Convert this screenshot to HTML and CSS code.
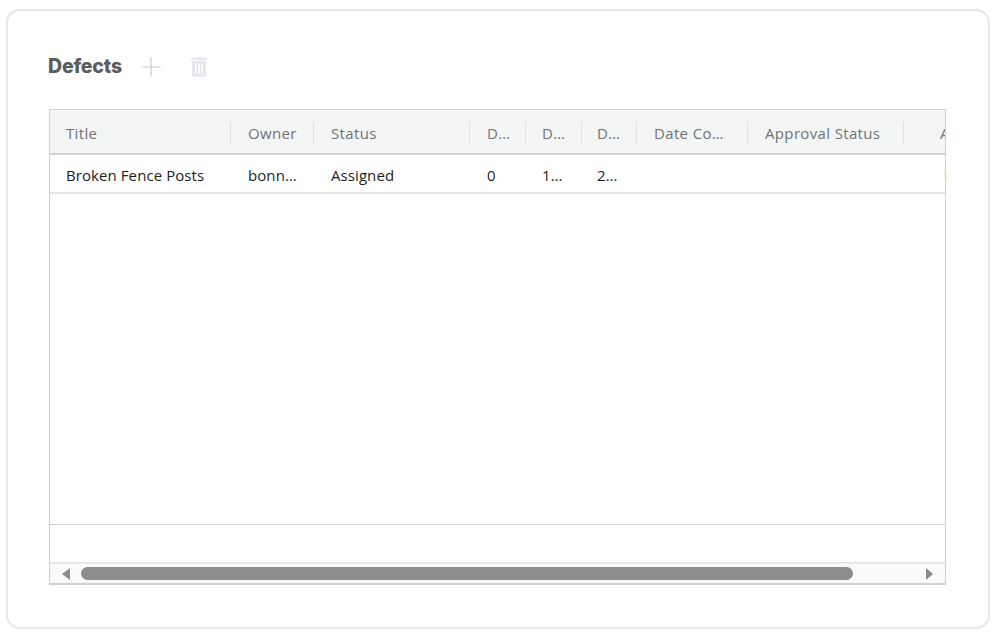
FILE: index.html
```html
<!DOCTYPE html>
<html lang="en">
<head>
<meta charset="utf-8">
<title>Defects</title>
<link rel="stylesheet" href="styles.css">
</head>
<body>
<main class="card">
  <div class="toolbar">
    <h2 class="title">Defects</h2>
    <button class="tool tool-add" aria-label="Add">
      <svg width="20" height="20" viewBox="0 0 20 20"><path d="M10 .5v19M.5 10h19" fill="none" stroke="#c8c8d6" stroke-width="1.2"/></svg>
    </button>
    <button class="tool tool-del" aria-label="Delete">
      <svg width="18" height="21" viewBox="0 0 18 21"><path d="M6.500 2V.7h5V2H17v2.200H1V2zM2 5h14v14.200a1.500 1.500 0 0 1-1.500 1.500h-11A1.500 1.500 0 0 1 2 19.200zM5 7.500v10.500h1.500V7.500zM8.250 7.500v10.500h1.500V7.500zM11.500 7.500v10.500H13V7.500z" fill="#e6e6ee" fill-rule="evenodd"/></svg>
    </button>
  </div>
  <section class="grid">
    <div class="row head">
      <div class="cell c-title">Title</div>
      <div class="cell c-owner">Owner</div>
      <div class="cell c-status">Status</div>
      <div class="cell c-d1">D…</div>
      <div class="cell c-d2">D…</div>
      <div class="cell c-d3">D…</div>
      <div class="cell c-date">Date Co…</div>
      <div class="cell c-appr">Approval Status</div>
      <div class="cell c-last">A</div>
    </div>
    <div class="row body-row">
      <div class="cell c-title">Broken Fence Posts</div>
      <div class="cell c-owner">bonn…</div>
      <div class="cell c-status">Assigned</div>
      <div class="cell c-d1">0</div>
      <div class="cell c-d2">1…</div>
      <div class="cell c-d3">2…</div>
      <div class="cell c-date"></div>
      <div class="cell c-appr"></div>
      <div class="cell c-last"><span class="flag"></span></div>
    </div>
    <div class="empty"></div>
    <div class="footer"></div>
    <div class="scrollbar">
      <span class="arrow arrow-left"></span>
      <div class="track"><div class="thumb"></div></div>
      <span class="arrow arrow-right"></span>
    </div>
  </section>
</main>
</body>
</html>
```
FILE: styles.css
```css
* { box-sizing: border-box; }
html, body { height: 100%; }
body {
  margin: 0;
  background: #fff;
  font-family: "Open Sans", "Noto Sans", sans-serif;
  padding: 9px 6px 3px 5.500px;
}
.card {
  width: 984px;
  height: 620px;
  border: 2px solid #e6e7e8;
  border-radius: 14px;
  background: #fff;
  padding: 39px 41px 0 40.500px;
  display: flex;
  flex-direction: column;
}
.toolbar {
  display: flex;
  align-items: center;
  height: 32px;
}
.title {
  margin: 0;
  font-family: Inter, "Open Sans", sans-serif;
  font-size: 19.500px;
  font-weight: 800;
  letter-spacing: -0.2px;
  color: #5b5c60;
  width: 93px;
}
.tool {
  border: 0;
  background: none;
  padding: 0;
  display: flex;
}
.tool-add { margin-top: 1px; }
.tool-del { margin-left: 29px; }
.grid {
  margin-top: 27px;
  margin-left: 1px;
  width: 897px;
  height: 476px;
  border: 2px solid #ccd2d6;
  border-width: 1px 1px 2px 1px;
  display: flex;
  flex-direction: column;
  overflow: hidden;
}
.row { display: flex; flex: none; }
.head {
  height: 45px;
  background: #f4f6f6;
  border-bottom: 2px solid #ccd2d6;
  color: #707276;
  letter-spacing: 0.35px;
}
.body-row {
  height: 39px;
  border-bottom: 2px solid #e3e6e8;
  color: #1e1e1e;
  letter-spacing: 0.08px;
}
.cell {
  flex: none;
  font-size: 15px;
  padding-left: 17px;
  padding-top: 3px;
  white-space: nowrap;
  display: flex;
  align-items: center;
  position: relative;
  overflow: hidden;
}
.c-title { width: 181px; padding-left: 16px; }
.c-owner { width: 83px; }
.c-status { width: 156px; }
.c-d1 { width: 56px; }
.c-d2 { width: 56px; padding-left: 16px; }
.c-d3 { width: 55px; padding-left: 15px; }
.c-date { width: 111px; }
.c-appr { width: 156px; }
.c-last { width: 42px; padding-left: 36px; }
.head .cell:not(.c-last)::after {
  content: "";
  position: absolute;
  right: 0;
  top: 12px;
  height: 22px;
  width: 1px;
  background: #dfe2e4;
}
.flag {
  width: 2px;
  height: 10px;
  margin-left: 4px;
  background: #fbf8cf;
}
.empty { flex: 1; }
.footer {
  flex: none;
  height: 38px;
  border-top: 1px solid #ccd2d6;
}
.scrollbar {
  flex: none;
  height: 21px;
  background: #fafafa;
  border-top: 2px solid #e8e9ea;
  display: flex;
  align-items: center;
  padding: 0 12px;
}
.track { flex: 1; padding-left: 11px; }
.thumb {
  width: 772px;
  height: 13px;
  border-radius: 7px;
  background: #8c8c8c;
}
.arrow {
  width: 0;
  height: 0;
  border-top: 6.500px solid transparent;
  border-bottom: 6.500px solid transparent;
}
.arrow-left { border-right: 8px solid #8c8c8c; }
.arrow-right { border-left: 7px solid #8c8c8c; }
```
